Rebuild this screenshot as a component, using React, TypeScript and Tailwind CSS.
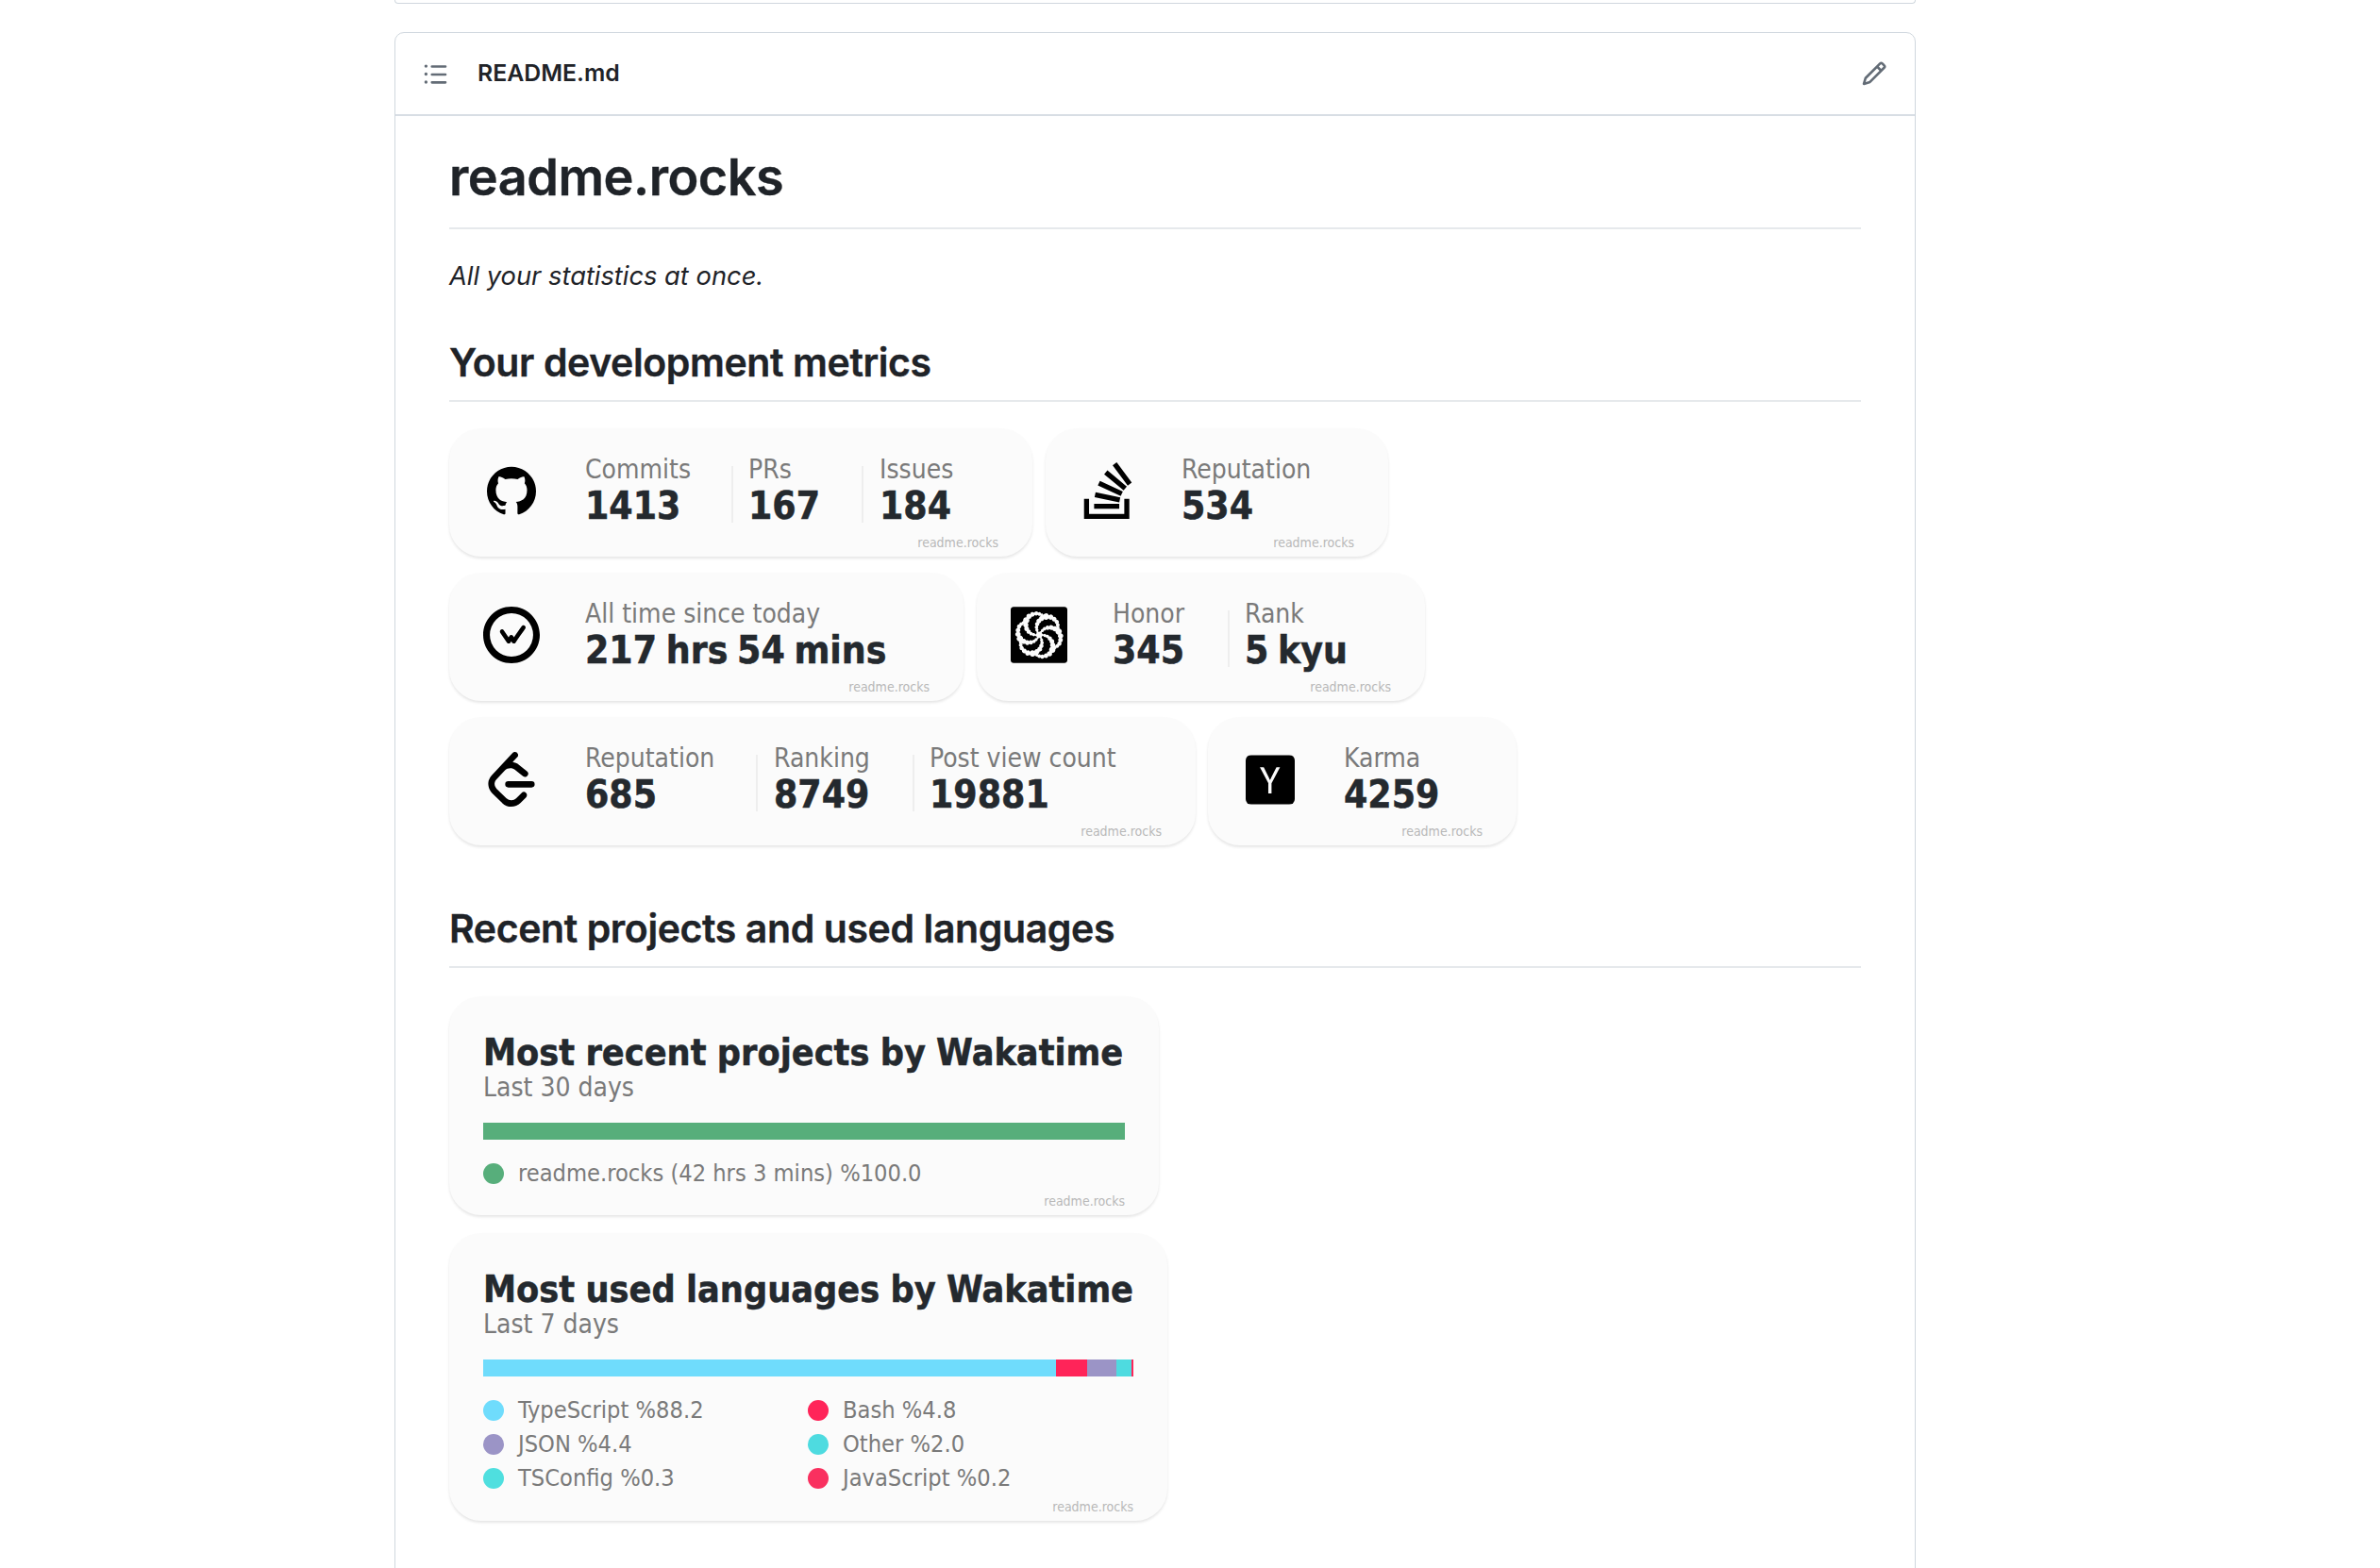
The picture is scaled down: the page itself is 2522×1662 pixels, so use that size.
import React from "react";
import { SiGithub, SiStackoverflow, SiWakatime, SiCodewars, SiLeetcode, SiYcombinator } from "react-icons/si";

function Mark() {
  return <span className="absolute right-[36px] bottom-[6px] text-[14px] leading-[18px] text-[#b8b8b8] font-['DejaVu_Sans_Condensed','Liberation_Sans',sans-serif]">readme.rocks</span>;
}

function Stat({ label, value, w }: { label: string; value: string; w: string }) {
  return (
    <div className={"mt-[27px] " + w}>
      <div className="text-[28px] leading-[34px] text-[#7a7a7a] whitespace-nowrap">{label}</div>
      <div className="text-[40.5px] leading-[43px] font-bold text-[#24292e] [-webkit-text-stroke:0.5px_#24292e] [word-spacing:-3px] whitespace-nowrap">{value}</div>
    </div>
  );
}

function Div() {
  return <div className="mt-[40px] h-[60px] w-[2px] bg-[#eeeeee] shrink-0" />;
}

function Card({ w, icon, children }: { w: string; icon: React.ReactNode; children: React.ReactNode }) {
  return (
    <div className={"relative h-[136px] flex pl-[36px] rounded-[34px] bg-[#fbfbfb] shadow-[0_2px_3px_rgba(0,0,0,0.1)] font-['DejaVu_Sans_Condensed','DejaVu_Sans',sans-serif] " + w}>
      <div className="mt-[36px] w-[60px] h-[60px] mr-[48px] flex items-center justify-center shrink-0 text-black">{icon}</div>
      {children}
      <Mark />
    </div>
  );
}

function Legend({ color, text, w }: { color: string; text: string; w?: string }) {
  return (
    <div className={"flex items-center h-[36px] " + (w ?? "")}>
      <span className="w-[22px] h-[22px] rounded-full mr-[15px] shrink-0" style={{ backgroundColor: color }} />
      <span className="text-[25.2px] text-[#7a7a7a] whitespace-nowrap">{text}</span>
    </div>
  );
}

function Project({ w, h, title, sub, children }: { w: string; h: string; title: string; sub: string; children: React.ReactNode }) {
  return (
    <div className={"relative pl-[36px] pt-[36px] rounded-[34px] bg-[#fbfbfb] shadow-[0_2px_3px_rgba(0,0,0,0.1)] font-['DejaVu_Sans_Condensed','DejaVu_Sans',sans-serif] " + w + " " + h}>
      <div className="text-[39.2px] leading-[48px] font-bold text-[#24292e] [-webkit-text-stroke:0.5px_#24292e] [word-spacing:-1px] whitespace-nowrap">{title}</div>
      <div className="text-[28px] leading-[26px] text-[#7a7a7a] whitespace-nowrap">{sub}</div>
      {children}
      <Mark />
    </div>
  );
}

export default function App() {
  return (
    <div className="h-[1662px] overflow-hidden bg-white font-['Inter','Liberation_Sans',sans-serif] text-[#1f2328]">
      <div className="ml-[418px] w-[1612px] h-[4px] border border-t-0 border-[#d0d7de] rounded-b-[10px]" />
      <div className="ml-[418px] mt-[30px] w-[1612px] h-[1700px] border border-[#d0d7de] rounded-[10px]">
        <div className="h-[88px] border-b-2 border-[#d8dee4] flex items-center pl-[29px] pr-[29px]">
          <svg viewBox="0 0 16 16" className="w-[27px] h-[27px] fill-[#636c76] mr-[31px]">
            <path d="M5.75 2.5h8.5a.75.75 0 0 1 0 1.5h-8.5a.75.75 0 0 1 0-1.5Zm0 5h8.5a.75.75 0 0 1 0 1.5h-8.5a.75.75 0 0 1 0-1.5Zm0 5h8.5a.75.75 0 0 1 0 1.5h-8.5a.75.75 0 0 1 0-1.5ZM2 14a1 1 0 1 1 0-2 1 1 0 0 1 0 2Zm1-6a1 1 0 1 1-2 0 1 1 0 0 1 2 0ZM2 4a1 1 0 1 1 0-2 1 1 0 0 1 0 2Z" />
          </svg>
          <span className="text-[24.8px] font-semibold">README.md</span>
          <svg viewBox="0 0 16 16" className="ml-auto w-[28px] h-[28px] fill-[#636c76]">
            <path d="M11.013 1.427a1.75 1.75 0 0 1 2.474 0l1.086 1.086a1.75 1.75 0 0 1 0 2.474l-8.61 8.61c-.21.21-.47.364-.756.445l-3.251.93a.75.75 0 0 1-.927-.928l.929-3.25c.081-.286.235-.547.445-.758l8.61-8.61Zm.176 4.823L9.75 4.81l-6.286 6.287a.253.253 0 0 0-.064.108l-.558 1.953 1.953-.558a.253.253 0 0 0 .108-.064Zm1.238-3.763a.25.25 0 0 0-.354 0L10.811 3.75l1.439 1.44 1.263-1.263a.25.25 0 0 0 0-.354Z" />
          </svg>
        </div>
        <div className="pl-[57px] pr-[57px]">
          <h1 className="mt-[33px] pb-[21px] text-[54px] leading-[64px] font-semibold tracking-[-0.5px] [-webkit-text-stroke:0.4px_#1f2328] border-b-2 border-[#e6e9ec]">readme.rocks</h1>
          <p className="mt-[30px] text-[27.3px] leading-[40px] italic">All your statistics at once.</p>
          <h2 className="mt-[47px] pb-[16px] text-[41px] leading-[48px] font-semibold tracking-[-0.4px] [-webkit-text-stroke:0.4px_#1f2328] border-b-2 border-[#e6e9ec]">Your development metrics</h2>

          <div className="mt-[28px] flex flex-col gap-[17px]">
            <div className="flex gap-[14px]">
              <Card w="w-[618px]" icon={<SiGithub className="w-[52px] h-[52px]" />}>
                <Stat label="Commits" value="1413" w="w-[155px]" />
                <Div />
                <Stat label="PRs" value="167" w="w-[136px] pl-[16px]" />
                <Div />
                <Stat label="Issues" value="184" w="pl-[17px]" />
              </Card>
              <Card w="w-[363px]" icon={<SiStackoverflow className="w-[60px] h-[60px]" />}>
                <Stat label="Reputation" value="534" w="" />
              </Card>
            </div>
            <div className="flex gap-[14px]">
              <Card w="w-[545px]" icon={<SiWakatime className="w-[60px] h-[60px]" />}>
                <Stat label="All time since today" value="217 hrs 54 mins" w="" />
              </Card>
              <Card w="w-[475px]" icon={<SiCodewars className="w-[60px] h-[60px] rounded-[3px]" />}>
                <Stat label="Honor" value="345" w="w-[122px]" />
                <Div />
                <Stat label="Rank" value="5 kyu" w="pl-[16px]" />
              </Card>
            </div>
            <div className="flex gap-[13px]">
              <Card w="w-[791px]" icon={<SiLeetcode className="w-[58px] h-[58px]" />}>
                <Stat label="Reputation" value="685" w="w-[181px]" />
                <Div />
                <Stat label="Ranking" value="8749" w="w-[164px] pl-[17px]" />
                <Div />
                <Stat label="Post view count" value="19881" w="pl-[16px]" />
              </Card>
              <Card w="w-[327px]" icon={<SiYcombinator className="w-[52px] h-[53px] rounded-[6px]" />}>
                <Stat label="Karma" value="4259" w="" />
              </Card>
            </div>
          </div>

          <h2 className="mt-[64px] pb-[16px] text-[41px] leading-[48px] font-semibold tracking-[-0.4px] [-webkit-text-stroke:0.4px_#1f2328] border-b-2 border-[#e6e9ec]">Recent projects and used languages</h2>

          <div className="mt-[30px] flex flex-col gap-[19px]">
            <Project w="w-[752px]" h="h-[232px]" title="Most recent projects by Wakatime" sub="Last 30 days">
              <div className="mt-[24px] w-[680px] h-[18px] bg-[#57ae7b]" />
              <div className="mt-[18px]"><Legend color="#57ae7b" text="readme.rocks (42 hrs 3 mins) %100.0" /></div>
            </Project>
            <Project w="w-[761px]" h="h-[305px]" title="Most used languages by Wakatime" sub="Last 7 days">
              <div className="mt-[24px] w-[689px] h-[18px] flex">
                <div className="w-[607px] bg-[#6fdcfc]" />
                <div className="w-[33px] bg-[#ff2459]" />
                <div className="w-[31px] bg-[#9b94c6]" />
                <div className="w-[16px] bg-[#4edbe0]" />
                <div className="w-[2px] bg-[#ff2459]" />
              </div>
              <div className="mt-[18px] grid grid-cols-[344px_1fr]">
                <Legend color="#6fdcfc" text="TypeScript %88.2" />
                <Legend color="#ff2459" text="Bash %4.8" />
                <Legend color="#9b94c6" text="JSON %4.4" />
                <Legend color="#4edbe0" text="Other %2.0" />
                <Legend color="#4fdfdf" text="TSConfig %0.3" />
                <Legend color="#f9305f" text="JavaScript %0.2" />
              </div>
            </Project>
          </div>
        </div>
      </div>
    </div>
  );
}
